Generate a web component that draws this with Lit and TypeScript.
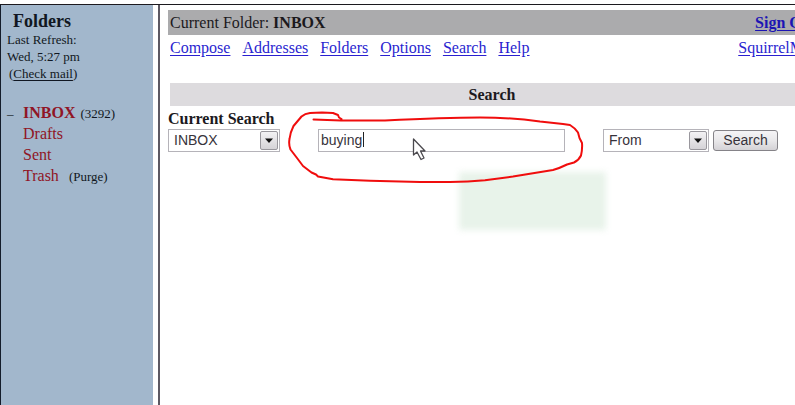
import { LitElement, html, css, svg } from "lit";
import { customElement, property } from "lit/decorators.js";

const folders = ["Drafts", "Sent"];
const menu = ["Compose", "Addresses", "Folders", "Options", "Search", "Help"];

@customElement("folder-list")
class FolderList extends LitElement {
  static styles = css`
    :host { display: block; background: #a2b7cc; color: #111722; padding: 6px 6px 0; font-size: 13px; line-height: 17px; }
    h1 { margin: 0; padding: 0 6px; font-size: 18px; line-height: 20px; }
    a { color: inherit; text-decoration: underline; text-underline-offset: 2px; }
    .refresh { margin: 0; }
    .check { padding-left: 2px; }
    ul { list-style: none; margin: 20px 0 0; padding: 0; font-size: 16px; line-height: 21px; }
    li { display: flex; align-items: baseline; height: 21px; }
    .mark { width: 16px; flex: none; font-size: 13px; }
    .name { color: #901525; text-decoration: none; }
    .inbox { font-weight: bold; }
    .note { font-size: 13px; margin-left: 5px; }
    .purge { margin-left: 10px; }
    .purge a { text-decoration: none; }
  `;
  render() {
    return html`
      <h1>Folders</h1>
      <p class="refresh">Last Refresh:<br />Wed, 5:27 pm</p>
      <div class="check">(<a href="#check">Check mail</a>)</div>
      <ul>
        <li><span class="mark">–</span><a class="name inbox" href="#inbox">INBOX</a><span class="note">(3292)</span></li>
        ${folders.map((f) => html`<li><span class="mark"></span><a class="name" href="#${f}">${f}</a></li>`)}
        <li><span class="mark"></span><a class="name" href="#trash">Trash</a><span class="note purge">(<a href="#purge">Purge</a>)</span></li>
      </ul>
    `;
  }
}

@customElement("drop-down")
class DropDown extends LitElement {
  @property() label = "";
  @property() value = "";
  static styles = css`
    :host { display: block; position: relative; }
    select {
      appearance: none; display: block; box-sizing: border-box; width: 100%; height: 23px; margin: 0;
      padding: 0 20px 1px 5px; border: 1px solid #b5b3b9; border-radius: 0; background: #fff;
      color: #37333b; font: 14px "Liberation Sans", Arial, sans-serif;
    }
    .arrow {
      position: absolute; top: 2px; right: 2px; bottom: 2px; width: 16px; border: 1px solid #99979d;
      border-radius: 2px; background: linear-gradient(#f3f2f4, #d5d3d7); pointer-events: none;
      display: flex; align-items: center; justify-content: center;
    }
    svg { display: block; }
  `;
  render() {
    return html`
      <select aria-label=${this.label}><option>${this.value}</option></select>
      <span class="arrow"><svg width="8" height="5" viewBox="0 0 8 5"><path d="M0 .5h8L4 5z" fill="#111" /></svg></span>
    `;
  }
}

@customElement("app-root")
class AppRoot extends LitElement {
  static styles = css`
    :host {
      display: flex; flex-direction: column; box-sizing: border-box; min-height: 100vh; padding-top: 4px;
      overflow: hidden; position: relative; background: #fff; color: #1b191d;
      font: 16px/20px "Liberation Serif", "Times New Roman", serif;
    }
    .frames { flex: 1; display: flex; border-top: 1px solid #1c1a1f; border-left: 1px solid #141c2a; }
    folder-list { width: 140px; flex: none; }
    main { flex: 1; min-width: 0; margin-left: 5px; margin-right: -25px; padding: 5px 0 0 8px; border-left: 2px solid #5d5963; }
    a { color: #2a1fd0; text-underline-offset: 2px; }
    .bar { display: flex; justify-content: space-between; background: #ababad; padding: 3px 2px; line-height: 19px; }
    .bar a { font-weight: bold; color: #1c14b4; margin-right: 2px; }
    .menu { display: flex; justify-content: space-between; padding: 3px 0 0 2px; }
    nav { display: flex; gap: 12px; }
    h2 { margin: 25px 6px 0 2px; background: #dddbde; font-size: 16px; line-height: 23px; text-align: center; }
    h3 { margin: 3px 0 0; font-size: 16px; line-height: 20px; }
    form { display: flex; align-items: center; }
    .folder { width: 112px; }
    .text { position: relative; width: 247px; margin: 0 38px; }
    input {
      display: block; box-sizing: border-box; width: 100%; height: 23px; margin: 0; padding: 0 2px 2px;
      border: 1px solid #b5b3b9; border-radius: 0; color: #37333b; font: 14px "Liberation Sans", Arial, sans-serif;
    }
    .caret { position: absolute; left: 45px; top: 3px; width: 1px; height: 15px; background: #222; }
    .field { width: 106px; }
    button {
      width: 65px; height: 21px; margin: 0 0 0 4px; padding: 0 0 1px; border: 1px solid #858388; border-radius: 3px;
      background: linear-gradient(#f5f4f6, #e9e8ea 50%, #d4d2d6); color: #37333b;
      font: 14px "Liberation Sans", Arial, sans-serif;
    }
    .ghost { position: absolute; left: 459px; top: 172px; width: 147px; height: 58px; background: #e8f3ea; filter: blur(3px); }
    .ink { position: absolute; left: 0; top: 0; pointer-events: none; }
  `;
  render() {
    return html`
      <div class="frames">
        <folder-list></folder-list>
        <main>
          <div class="bar"><span>Current Folder: <b>INBOX</b></span><a href="#signout">Sign Out</a></div>
          <div class="menu">
            <nav>${menu.map((m) => html`<a href="#${m}">${m}</a>`)}</nav>
            <a href="#about">SquirrelMail</a>
          </div>
          <h2>Search</h2>
          <h3>Current Search</h3>
          <form @submit=${(e: Event) => e.preventDefault()}>
            <drop-down class="folder" label="Folder" value="INBOX"></drop-down>
            <div class="text"><input aria-label="Search for" value="buying" /><span class="caret"></span></div>
            <drop-down class="field" label="Search in" value="From"></drop-down>
            <button>Search</button>
          </form>
        </main>
      </div>
      <div class="ghost"></div>
      <svg class="ink" width="620" height="200" viewBox="0 0 620 200" aria-hidden="true">
        ${svg`
        <path fill="none" stroke="#f00d0d" stroke-width="2" stroke-linejoin="round" stroke-linecap="round"
          d="M313.5 119.5L341 120.5L385 120.5C415 119 445 117.5 480 117.5C500 117.5 522 119 540 121.5L563 124L570 125Q575 128 578 132.5L579.5 138L582 143Q582.5 149 581 155.5Q579 160 574 162.5L567 164.5Q560 168 553 170L513 176.5L485 180.3Q468 181.8 450 182H420L370 180.8L333 179.3L318 176.5L316 174.5L311.5 172.5L303 166L297 158L290.5 149.5Q288.5 145 289.5 139Q290 133 293.5 126L301.5 116.5Q305 113.5 310 113L322 112.5L333 113L338 115L339 117.5L341.5 119" />
        <path fill="#fff" stroke="#4b494e" stroke-width="1.3" stroke-linejoin="round"
          d="M413.5 139V155L417 152L421 159.5L424 158L420.5 151H425Z" />`}
      </svg>
    `;
  }
}
